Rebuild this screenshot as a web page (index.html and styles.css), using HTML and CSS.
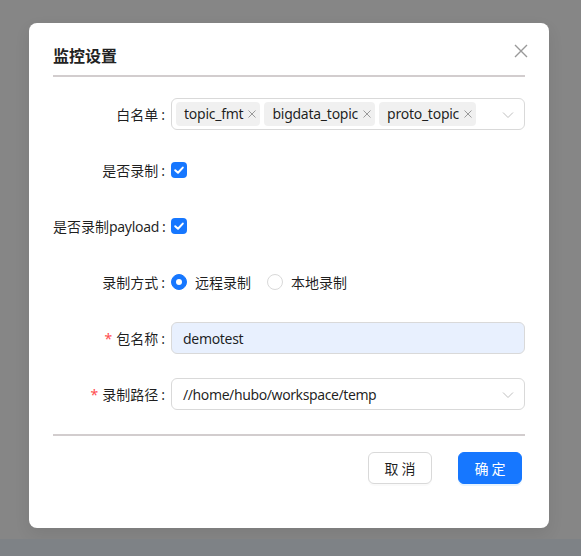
FILE: index.html
```html
<!DOCTYPE html>
<html lang="zh">
<head>
<meta charset="utf-8">
<title>监控设置</title>
<link rel="stylesheet" href="styles.css">
</head>
<body>
<div class="overlay">
  <div class="modal">
    <div class="modal-header">
      <div class="modal-title">监控设置</div>
      <span class="close" aria-label="close">
        <svg width="14" height="14" viewBox="0 0 14 14"><path d="M1 1L13 13M13 1L1 13" stroke="#999" stroke-width="1.4" fill="none"/></svg>
      </span>
    </div>
    <div class="divider"></div>
    <form class="form">
      <div class="row">
        <label class="label">白名单<span class="colon">:</span></label>
        <div class="control">
          <div class="select multi">
            <span class="tag">topic_fmt<svg class="tag-x" width="8" height="8" viewBox="0 0 8 8"><path d="M0.5 0.5L7.5 7.5M7.5 0.5L0.5 7.5" stroke="#9a9a9a" stroke-width="1" fill="none"/></svg></span>
            <span class="tag">bigdata_topic<svg class="tag-x" width="8" height="8" viewBox="0 0 8 8"><path d="M0.5 0.5L7.5 7.5M7.5 0.5L0.5 7.5" stroke="#9a9a9a" stroke-width="1" fill="none"/></svg></span>
            <span class="tag">proto_topic<svg class="tag-x" width="8" height="8" viewBox="0 0 8 8"><path d="M0.5 0.5L7.5 7.5M7.5 0.5L0.5 7.5" stroke="#9a9a9a" stroke-width="1" fill="none"/></svg></span>
            <svg class="chev" width="12" height="8" viewBox="0 0 12 8"><path d="M1 1.5L6 6.5L11 1.5" stroke="#bfbfbf" stroke-width="1" fill="none"/></svg>
          </div>
        </div>
      </div>
      <div class="row">
        <label class="label">是否录制<span class="colon">:</span></label>
        <div class="control">
          <span class="checkbox"><svg width="16" height="16" viewBox="0 0 16 16"><path d="M4.2 8.2L7 10.8L11.8 5.6" stroke="#fff" stroke-width="2" fill="none" stroke-linecap="round" stroke-linejoin="round"/></svg></span>
        </div>
      </div>
      <div class="row">
        <label class="label">是否录制<span class="latin">payload</span><span class="colon">:</span></label>
        <div class="control">
          <span class="checkbox"><svg width="16" height="16" viewBox="0 0 16 16"><path d="M4.2 8.2L7 10.8L11.8 5.6" stroke="#fff" stroke-width="2" fill="none" stroke-linecap="round" stroke-linejoin="round"/></svg></span>
        </div>
      </div>
      <div class="row">
        <label class="label">录制方式<span class="colon">:</span></label>
        <div class="control radios">
          <span class="radio-item"><span class="radio checked"></span><span>远程录制</span></span>
          <span class="radio-item"><span class="radio"></span><span>本地录制</span></span>
        </div>
      </div>
      <div class="row">
        <label class="label"><span class="req">*</span>包名称<span class="colon">:</span></label>
        <div class="control">
          <div class="input filled">demotest</div>
        </div>
      </div>
      <div class="row">
        <label class="label"><span class="req">*</span>录制路径<span class="colon">:</span></label>
        <div class="control">
          <div class="select single">
            <span class="value">//home/hubo/workspace/temp</span>
            <svg class="chev" width="12" height="8" viewBox="0 0 12 8"><path d="M1 1.5L6 6.5L11 1.5" stroke="#bfbfbf" stroke-width="1" fill="none"/></svg>
          </div>
        </div>
      </div>
    </form>
    <div class="divider bottom"></div>
    <div class="footer">
      <button type="button" class="btn">取 消</button>
      <button type="button" class="btn primary">确 定</button>
    </div>
  </div>
</div>
<div class="strip"></div>
</body>
</html>
```
FILE: styles.css
```css
* { box-sizing: border-box; }
html, body { margin: 0; padding: 0; }
body {
  width: 581px;
  height: 556px;
  overflow: hidden;
  background: #868686;
  font-family: "Noto Sans", "Noto Sans CJK SC", sans-serif;
  font-size: 14px;
  color: rgba(0, 0, 0, 0.88);
  display: flex;
  flex-direction: column;
}
.overlay {
  height: 539px;
  padding: 23px 0 0 29px;
  background: #868686;
}
.strip {
  flex: 1;
  background: #7e8286;
}
.modal {
  width: 520px;
  height: 505px;
  background: #fff;
  border-radius: 8px;
  padding: 20px 24px 0 24px;
  box-shadow: 0 6px 16px rgba(0, 0, 0, 0.08);
}
.modal-header {
  display: flex;
  justify-content: space-between;
  align-items: center;
  height: 24px;
}
.modal-title {
  font-family: "Noto Sans CJK SC", sans-serif;
  font-size: 16px;
  font-weight: 700;
  color: #222;
  line-height: 24px;
}
.close {
  display: flex;
  margin-right: -3px;
  margin-top: -8px;
}
.divider {
  height: 2px;
  background: #d2cdce;
  margin-top: 8px;
}
.form {
  margin-top: 21px;
  display: flex;
  flex-direction: column;
  gap: 24px;
}
.row {
  display: flex;
  align-items: center;
  height: 32px;
}
.label {
  width: 118px;
  flex: none;
  text-align: right;
  white-space: nowrap;
  color: rgba(0, 0, 0, 0.88);
  font-family: "Noto Sans CJK SC", "Noto Sans", sans-serif;
}
.latin {
  font-family: "Noto Sans", sans-serif;
  letter-spacing: -0.3px;
}
.colon {
  margin: 0 6px 0 3px;
  font-family: "Noto Sans", sans-serif;
}
.req {
  color: #ff4d4f;
  margin-right: 4px;
  font-family: "Noto Sans", sans-serif;
}
.control {
  flex: 1;
  display: flex;
  align-items: center;
}
.select, .input {
  width: 100%;
  height: 32px;
  border: 1px solid #d9d9d9;
  border-radius: 6px;
  display: flex;
  align-items: center;
  position: relative;
  background: #fff;
}
.select.multi {
  padding: 0 4px;
  gap: 4px;
}
.select.single { padding: 0 11px; }
.input { padding: 0 11px; letter-spacing: -0.3px; }
.value { letter-spacing: -0.4px; }
.input.filled { background: #e8f0fe; }
.chev {
  position: absolute;
  right: 10px;
  top: 12px;
}
.tag {
  height: 24px;
  line-height: 22px;
  background: rgba(0, 0, 0, 0.06);
  border-radius: 4px;
  padding: 0 4px 0 8px;
  display: inline-flex;
  align-items: center;
  white-space: nowrap;
  letter-spacing: -0.25px;
}
.tag-x {
  margin-left: 5px;
  flex: none;
}
.checkbox {
  width: 16px;
  height: 16px;
  border-radius: 4px;
  background: #1677ff;
  display: inline-flex;
}
.radio-item {
  display: inline-flex;
  align-items: center;
  margin-right: 8px;
  font-family: "Noto Sans CJK SC", sans-serif;
}
.radio-item > span:last-child { padding: 0 8px; }
.radio {
  width: 16px;
  height: 16px;
  border-radius: 50%;
  border: 1px solid #d9d9d9;
  background: #fff;
  display: inline-block;
  position: relative;
}
.radio.checked {
  background: #1677ff;
  border-color: #1677ff;
}
.radio.checked::after {
  content: "";
  position: absolute;
  left: 4px;
  top: 4px;
  width: 6px;
  height: 6px;
  border-radius: 50%;
  background: #fff;
}
.divider.bottom { margin-top: 24px; }
.footer {
  display: flex;
  justify-content: flex-end;
  gap: 26px;
  margin-top: 16px;
  padding-right: 3px;
}
.btn {
  width: 64px;
  height: 32px;
  border-radius: 6px;
  border: 1px solid #d9d9d9;
  background: #fff;
  font-family: "Noto Sans CJK SC", sans-serif;
  font-size: 14px;
  color: rgba(0, 0, 0, 0.88);
  padding: 0;
  box-shadow: 0 2px 0 rgba(0, 0, 0, 0.02);
}
.btn.primary {
  background: #1677ff;
  border-color: #1677ff;
  color: #fff;
  box-shadow: 0 2px 0 rgba(5, 145, 255, 0.1);
}
```
